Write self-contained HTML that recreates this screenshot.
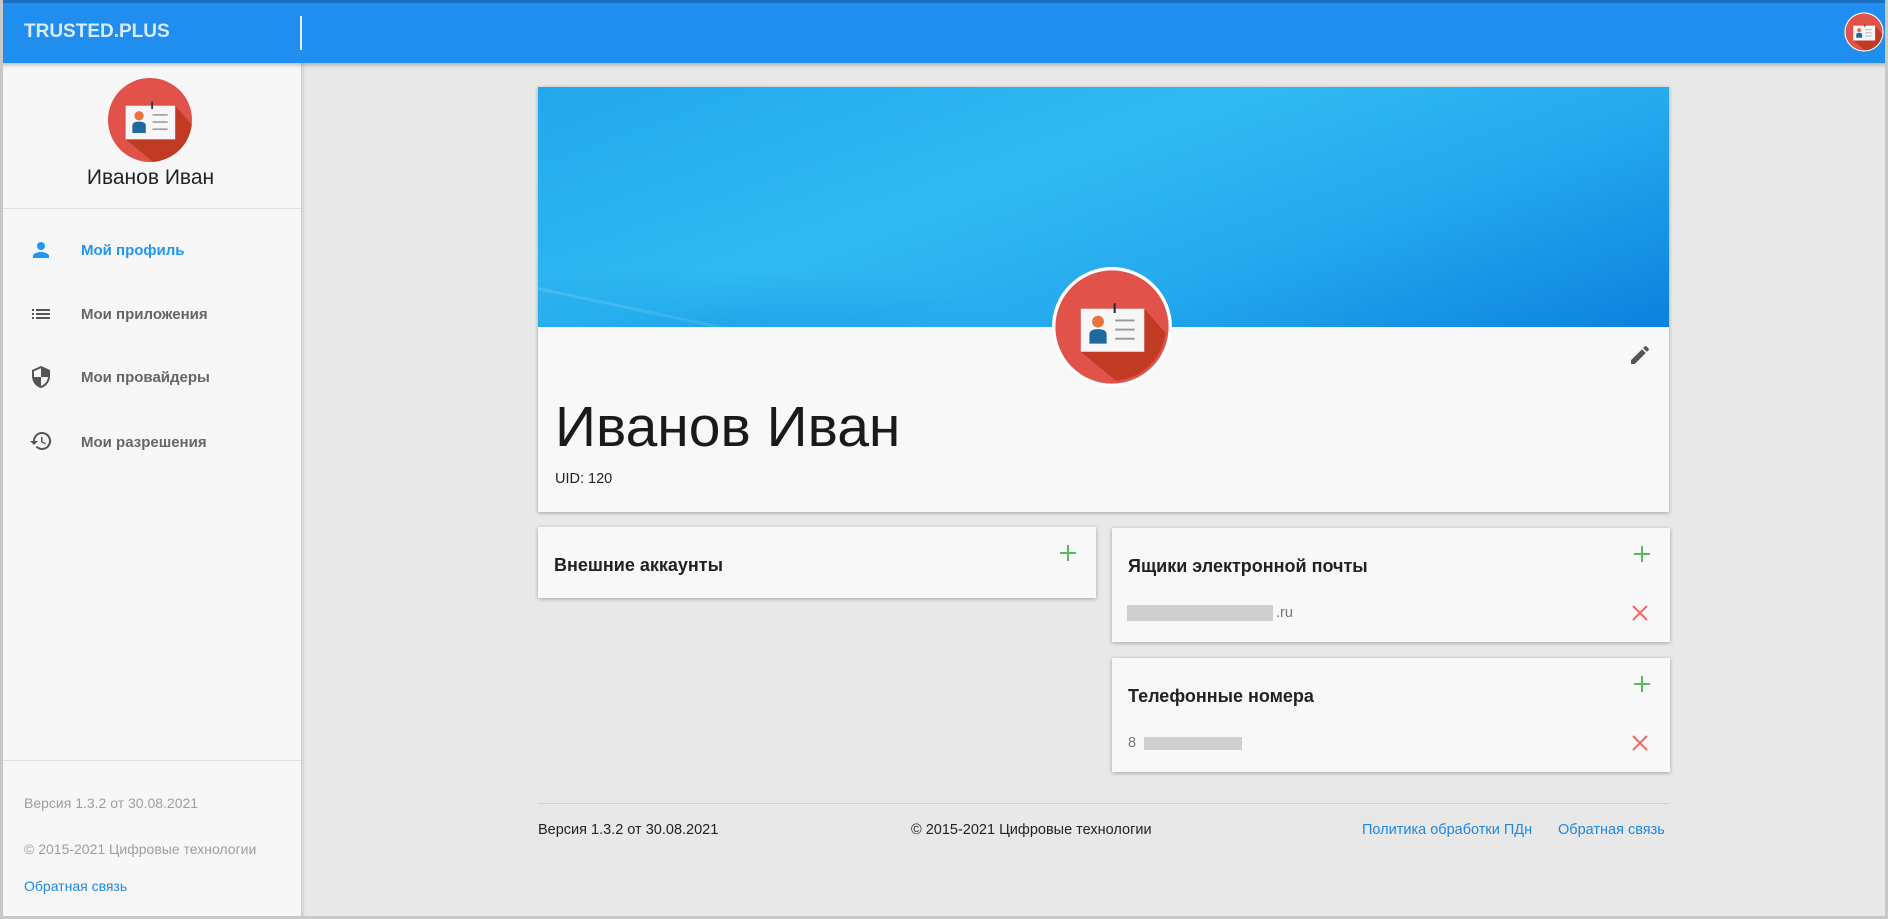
<!DOCTYPE html>
<html><head><meta charset="utf-8">
<style>
*{box-sizing:border-box;margin:0;padding:0}
body{width:1888px;height:919px;overflow:hidden;background:#e8e8e8;font-family:"Liberation Sans",sans-serif;position:relative}
.frame{position:absolute;inset:0;border:3px solid #c8c8c8;border-top:none;pointer-events:none;z-index:50}
.top{position:absolute;left:0;top:0;width:1888px;height:63px;background:#1f8eee;border-top:3px solid #1a6fc0;box-shadow:0 2px 4px rgba(0,0,0,.25);z-index:10}
.logo{position:absolute;left:24px;top:18px;color:#dbeaf8;font-weight:bold;font-size:19px;letter-spacing:0}
.div{position:absolute;left:300px;top:13px;width:2px;height:34px;background:#e6f0fb}
.side{position:absolute;left:0;top:63px;width:301px;height:856px;background:#f7f7f7;box-shadow:1px 0 4px rgba(0,0,0,.2);z-index:5}
.sname{position:absolute;left:0;width:301px;top:103px;text-align:center;font-size:21px;color:#222}
.hr{position:absolute;left:0;width:301px;height:1px;background:#e0e0e0}
.mi{position:absolute;left:81px;font-size:15px;font-weight:bold;color:#666}
.mi.act{color:#2196f3}
.ic{position:absolute;left:29px;width:24px;height:24px}
.sf{position:absolute;left:24px;font-size:14px;color:#9e9e9e}
.card{position:absolute;background:#f8f8f8;box-shadow:0 1px 4px rgba(0,0,0,.3)}
.ttl{position:absolute;left:16px;top:28px;font-size:18px;font-weight:bold;color:#222}
.plus{position:absolute;right:18px;top:16px;width:20px;height:20px}
.x{position:absolute;right:22px;width:16px;height:16px}
.bar{position:absolute;height:15px;background:#cfcfcf}
.ft{position:absolute;top:822px;font-size:14.5px;color:#222}
.ft a{color:#1e88e5;text-decoration:none}
</style></head><body>
<svg width="0" height="0" style="position:absolute"><defs>
<clipPath id="cc"><circle cx="0" cy="0" r="50"/></clipPath>
<g id="av">
<circle r="50" fill="#e0524a"/>
<polygon clip-path="url(#cc)" points="-29,23 30,-17 80,40 40,80" fill="#c13b24"/>
<rect x="-29" y="-17" width="59" height="40" fill="#f7f7f7"/>
<rect x="1.5" y="-22" width="2" height="9" fill="#263238"/>
<circle cx="-13" cy="-5" r="5.5" fill="#e9723f"/>
<path d="M-21,15.5 V7 Q-21,2 -13,2 Q-5,2 -5,7 V15.5Z" fill="#1e6aa0"/>
<rect x="3" y="-7" width="18" height="1.8" fill="#999"/>
<rect x="3" y="1.5" width="18" height="1.8" fill="#999"/>
<rect x="3" y="10" width="18" height="1.8" fill="#999"/>
</g></defs></svg>
<div class="top">
<div class="logo">TRUSTED.PLUS</div><div class="div"></div>
<svg style="position:absolute;left:1844px;top:9px" width="40" height="40" viewBox="-54 -54 108 108"><circle r="53" fill="#fff"/><use href="#av"/></svg>
</div>
<div class="side">
<svg style="position:absolute;left:108px;top:15px" width="84" height="84" viewBox="-50 -50 100 100"><use href="#av"/></svg>
<div class="sname">Иванов Иван</div>
<div class="hr" style="top:145px"></div>
<svg class="ic" style="top:175px" viewBox="0 0 24 24"><path fill="#2196f3" d="M12 12c2.2 0 4-1.8 4-4s-1.8-4-4-4-4 1.8-4 4 1.8 4 4 4zm0 2c-2.7 0-8 1.3-8 4v2h16v-2c0-2.7-5.3-4-8-4z"/></svg>
<div class="mi act" style="top:179px">Мой профиль</div>
<svg class="ic" style="top:239px" viewBox="0 0 24 24"><path fill="#555" d="M3 13h2v-2H3v2zm0 4h2v-2H3v2zm0-8h2V7H3v2zm4 4h14v-2H7v2zm0 4h14v-2H7v2zM7 7v2h14V7H7z"/></svg>
<div class="mi" style="top:243px">Мои приложения</div>
<svg class="ic" style="top:302px" viewBox="0 0 24 24"><path fill="#555" d="M12 1L3 5v6c0 5.6 3.8 10.7 9 12 5.2-1.3 9-6.4 9-12V5l-9-4zm0 11h7c-.5 4.1-3.3 7.8-7 8.9V12H5V6.3l7-3.1V12z"/></svg>
<div class="mi" style="top:306px">Мои провайдеры</div>
<svg class="ic" style="top:366px" viewBox="0 0 24 24"><path fill="#555" d="M13 3a9 9 0 0 0-9 9H1l3.9 3.9.1.1L9 12H6c0-3.9 3.1-7 7-7s7 3.1 7 7-3.1 7-7 7c-1.9 0-3.7-.8-4.9-2.1l-1.4 1.4A9 9 0 1 0 13 3zm-1 5v5l4.3 2.5.7-1.2-3.5-2.1V8H12z"/></svg>
<div class="mi" style="top:371px">Мои разрешения</div>
<div class="hr" style="top:697px"></div>
<div class="sf" style="top:732px">Версия 1.3.2 от 30.08.2021</div>
<div class="sf" style="top:778px">© 2015-2021 Цифровые технологии</div>
<div class="sf" style="top:815px;color:#1e88e5">Обратная связь</div>
</div>

<div class="card" style="left:538px;top:87px;width:1131px;height:425px">
<div style="position:absolute;left:0;top:0;width:1131px;height:240px;background:linear-gradient(160deg,#22a8ec 0%,#30b9f2 40%,#25aaee 65%,#0b82df 100%);overflow:hidden">
<div style="position:absolute;left:0;top:200px;width:500px;height:3px;background:rgba(255,255,255,.15);transform:rotate(12deg);transform-origin:0 0"></div>
<div style="position:absolute;left:-200px;top:180px;width:700px;height:160px;background:radial-gradient(ellipse at center,rgba(10,140,220,.45),rgba(10,140,220,0) 70%)"></div>
</div>
<svg style="position:absolute;left:514px;top:180px" width="120" height="120" viewBox="-53 -53 106 106"><circle r="53" fill="#fff"/><circle r="50" fill="#e0524a"/><use href="#av" transform="scale(.95)"/></svg>
<svg style="position:absolute;left:1090px;top:256px" width="24" height="24" viewBox="0 0 24 24"><path fill="#555" d="M3 17.25V21h3.75L17.8 9.94l-3.75-3.75L3 17.25zM20.7 7.04a1 1 0 0 0 0-1.41l-2.34-2.34a1 1 0 0 0-1.41 0l-1.83 1.83 3.75 3.75 1.83-1.83z"/></svg>
<div style="position:absolute;left:17px;top:312px;font-size:57px;color:#1a1a1a;line-height:1">Иванов Иван</div>
<div style="position:absolute;left:17px;top:384px;font-size:14.5px;color:#222">UID: 120</div>
</div>

<div class="card" style="left:538px;top:527px;width:558px;height:71px">
<div class="ttl">Внешние аккаунты</div>
<svg class="plus" viewBox="0 0 20 20"><path d="M10 2v16M2 10h16" stroke="#5cb85c" stroke-width="2"/></svg>
</div>

<div class="card" style="left:1112px;top:528px;width:558px;height:114px">
<div class="ttl">Ящики электронной почты</div>
<svg class="plus" viewBox="0 0 20 20"><path d="M10 2v16M2 10h16" stroke="#5cb85c" stroke-width="2"/></svg>
<div class="bar" style="left:15px;top:77px;width:146px;height:16px"></div>
<div style="position:absolute;left:164px;top:77px;font-size:14.5px;color:#777">.ru</div>
<svg class="x" style="top:77px" viewBox="0 0 16 16"><path d="M1 1l14 14M15 1L1 15" stroke="#ef6a64" stroke-width="2"/></svg>
</div>

<div class="card" style="left:1112px;top:658px;width:558px;height:114px">
<div class="ttl">Телефонные номера</div>
<svg class="plus" viewBox="0 0 20 20"><path d="M10 2v16M2 10h16" stroke="#5cb85c" stroke-width="2"/></svg>
<div style="position:absolute;left:16px;top:77px;font-size:14.5px;color:#777">8</div>
<div class="bar" style="left:32px;top:79px;width:98px;height:13px"></div>
<svg class="x" style="top:77px" viewBox="0 0 16 16"><path d="M1 1l14 14M15 1L1 15" stroke="#ef6a64" stroke-width="2"/></svg>
</div>

<div style="position:absolute;left:538px;top:803px;width:1131px;height:1px;background:#d0d0d0"></div>
<div class="ft" style="left:538px">Версия 1.3.2 от 30.08.2021</div>
<div class="ft" style="left:911px">© 2015-2021 Цифровые технологии</div>
<div class="ft" style="left:1362px"><a>Политика обработки ПДн</a></div>
<div class="ft" style="left:1558px"><a>Обратная связь</a></div>
<div class="frame"></div>
</body></html>
